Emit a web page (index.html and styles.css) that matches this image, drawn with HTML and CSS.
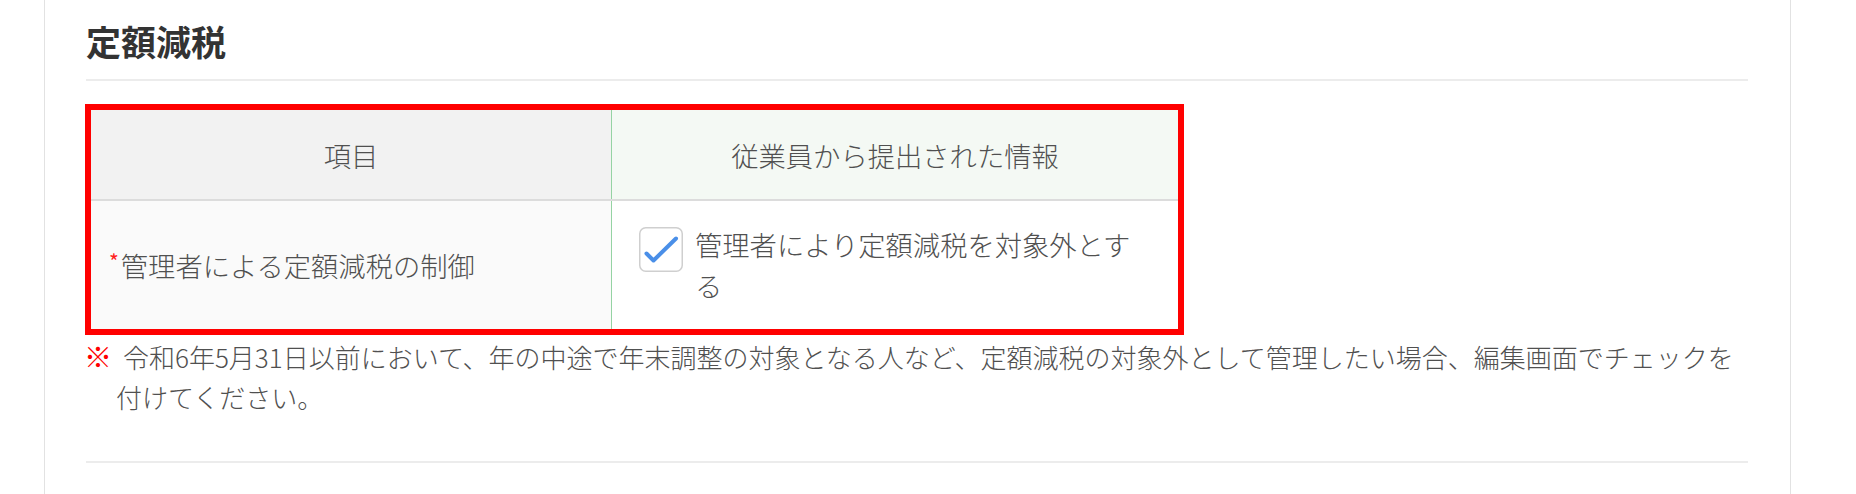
FILE: index.html
```html
<!DOCTYPE html>
<html lang="ja">
<head>
<meta charset="utf-8">
<title>定額減税</title>
<link rel="stylesheet" href="styles.css">
</head>
<body>
<div class="page">
  <section class="card">
    <h2 class="title">定額減税</h2>
    <div class="highlight">
      <table class="info-table">
        <thead>
          <tr>
            <th class="col-item">項目</th>
            <th class="col-submitted">従業員から提出された情報</th>
          </tr>
        </thead>
        <tbody>
          <tr>
            <td class="item-label"><span class="req">*</span>管理者による定額減税の制御</td>
            <td class="item-value">
              <div class="check">
                <span class="box">
                  <svg width="44" height="45" viewBox="0 0 44 45" aria-hidden="true">
                    <rect x="0.75" y="0.75" width="42.5" height="43.5" rx="6" ry="6" fill="#fff" stroke="#cfcfcf" stroke-width="1.5"/>
                    <path d="M7.5 26.5 L14.5 33.5 L37 11.5" fill="none" stroke="#4a8fe8" stroke-width="4" stroke-linecap="round" stroke-linejoin="round"/>
                  </svg>
                </span>
                <span class="check-text">管理者により定額減税を対象外とする</span>
              </div>
            </td>
          </tr>
        </tbody>
      </table>
    </div>
    <p class="note"><span class="mark">※</span>令和6年5月31日以前において、年の中途で年末調整の対象となる人など、定額減税の対象外として管理したい場合、編集画面でチェックを付けてください。</p>
    <div class="divider"></div>
  </section>
</div>
</body>
</html>
```

FILE: styles.css
```css
html, body {
  margin: 0;
  padding: 0;
  background: #fff;
}

body {
  font-family: "Noto Sans CJK JP", "Noto Sans", sans-serif;
  font-weight: 300;
  color: #505050;
}

.page {
  height: 494px;
  overflow: hidden;
}

.card {
  box-sizing: border-box;
  margin-left: 44px;
  width: 1747px;
  min-height: 494px;
  border-left: 1px solid #e2e2e2;
  border-right: 1px solid #e2e2e2;
  padding: 0 42px 0 41px;
}

.title {
  margin: 0;
  padding-top: 15px;
  padding-bottom: 12px;
  font-size: 35px;
  line-height: 52px;
  font-weight: 700;
  color: #333;
  border-bottom: 2px solid #ececec;
}

.highlight {
  box-sizing: border-box;
  width: 1099px;
  margin-top: 23px;
  margin-left: -1px;
  border: 6px solid #ff0000;
}

.info-table {
  width: 100%;
  border-collapse: collapse;
  table-layout: fixed;
  font-size: 27.3px;
}

.info-table th {
  height: 89px;
  padding: 0;
  font-weight: 300;
  text-align: center;
  vertical-align: middle;
  color: #505050;
  border-bottom: 2px solid #dcdcdc;
}

.col-item {
  width: 520px;
  background: #f2f2f2;
  border-right: 1px solid #95d3a3;
}

.col-submitted {
  background: #f4f9f4;
}

.item-label {
  height: 128px;
  padding: 0 0 0 18px;
  background: #fafafa;
  vertical-align: middle;
  border-right: 1px solid #95d3a3;
  line-height: 41px;
}

.req {
  display: inline-block;
  color: #ff2020;
  font-size: 21px;
  font-weight: 400;
  line-height: 21px;
  vertical-align: 7px;
  margin-right: 2px;
}

.item-value {
  padding: 23px 27px 23px 27px;
  background: #fff;
  vertical-align: middle;
}

.check {
  display: flex;
  align-items: flex-start;
  gap: 12px;
}

.box {
  flex: none;
  display: block;
  width: 44px;
  height: 45px;
  margin-top: 3px;
}

.box svg {
  display: block;
}

.check-text {
  line-height: 41px;
}

.note {
  margin: 1px 13px 0 -2px;
  padding-left: 32px;
  text-indent: -32px;
  font-size: 26px;
  line-height: 40px;
  color: #505050;
}

.mark {
  color: #ff0000;
  font-size: 28px;
  font-weight: 700;
  margin-right: 11px;
}

.divider {
  margin-top: 44px;
  border-top: 2px solid #ececec;
}
```
